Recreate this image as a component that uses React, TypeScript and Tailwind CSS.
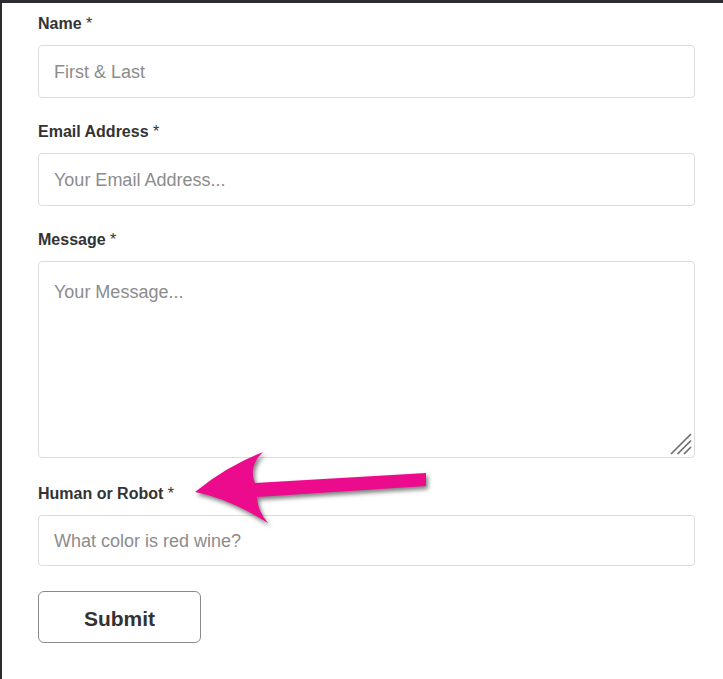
import React from 'react';

const font = { fontFamily: '"Liberation Sans", Arial, sans-serif' };

const Label: React.FC<{ text: string }> = ({ text }) => (
  <label className="block text-[16px] leading-[21px] text-[#333] mb-[11px]">
    <span className="font-bold">{text}</span> *
  </label>
);

const inputCls =
  'block w-full h-[53px] border border-[#dcdcdc] rounded-[4px] px-[15px] pt-[2px] text-[18px] text-[#333] placeholder:text-[#8c8c8c] bg-white outline-none';

const App: React.FC = () => {
  return (
    <div className="min-h-[679px] bg-white border-t-[3px] border-l-2 border-[#2b2b30]" style={font}>
      <div className="relative pl-[36px] pr-[28px] pt-[10px]">
        {/* Name */}
        <Label text="Name" />
        <input className={inputCls} placeholder="First & Last" />

        <div className="h-[23px]" />
        <Label text="Email Address" />
        <input className={inputCls} placeholder="Your Email Address..." />

        <div className="h-[23px]" />
        <Label text="Message" />
        <div className="relative">
          <textarea
            className="block w-full h-[197px] resize-none border border-[#dcdcdc] rounded-[4px] px-[15px] pt-[17px] pb-[13px] text-[18px] leading-[1.5] text-[#333] placeholder:text-[#8c8c8c] bg-white outline-none"
            placeholder="Your Message..."
          />
          {/* resize grip */}
          <svg className="absolute right-[3px] bottom-[3px]" width="22" height="22" viewBox="0 0 22 22">
            <g stroke="#6f6f6f" strokeWidth="1.7" strokeLinecap="butt">
              <line x1="1" y1="21" x2="21" y2="1" />
              <line x1="7.5" y1="21" x2="21" y2="7.5" />
              <line x1="14" y1="21" x2="21" y2="14" />
            </g>
          </svg>
        </div>

        <div className="h-[25px]" />
        <Label text="Human or Robot" />
        <input className={`${inputCls} !h-[51px]`} placeholder="What color is red wine?" />

        <div className="h-[25px]" />
        <button className="block w-[163px] h-[52px] pt-[3px] border border-[#8a8a8a] rounded-[6px] bg-white text-[21px] font-bold text-[#333]">
          Submit
        </button>

        {/* annotation arrow */}
        <svg
          className="absolute left-[183px] top-[437px] pointer-events-none"
          width="260"
          height="100"
          viewBox="185 440 260 100"
          style={{ filter: 'drop-shadow(2px 3px 2px rgba(0,0,0,0.5))' }}
        >
          <path
            d="M195 492 Q227 466 263 452 Q248 466 255 483 L426 473 L426 486 L257 497 Q258 512 268 523 Q228 498 195 492 Z"
            fill="#ec0b8d"
          />
        </svg>
      </div>
    </div>
  );
};

export default App;
